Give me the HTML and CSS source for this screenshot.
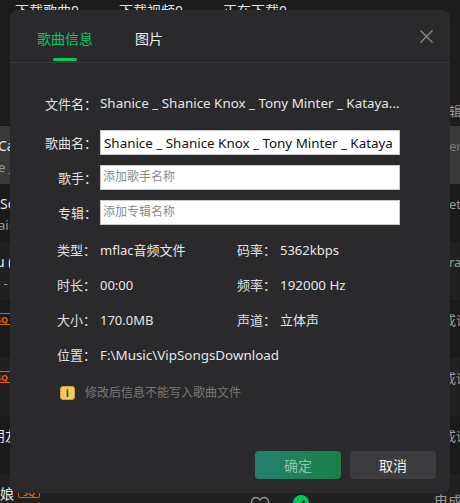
FILE: index.html
```html
<!DOCTYPE html>
<html lang="zh-CN">
<head>
    <meta charset="UTF-8">
    <meta name="viewport" content="width=device-width, initial-scale=1.0">
    <title>歌曲信息</title>
    <link rel="stylesheet" href="styles.css">
</head>
<body>
    <!-- page behind the dialog -->
    <div class="page">
        <div class="top-tabs">
            <span>下载歌曲0</span>
            <span>下载视频0</span>
            <span>正在下载0</span>
        </div>
        <div class="list-head"><span></span><span class="right-col head-col">专辑</span></div>
        <div class="song selected">
            <div class="song-left"><p class="title cut">Ca</p><p class="sub cut">e _</p></div>
            <div class="right-col dim">ery</div>
        </div>
        <div class="song">
            <div class="song-left"><p class="title">So</p><p class="sub cut">ain</p></div>
            <div class="right-col">et</div>
        </div>
        <div class="song alt">
            <div class="song-left"><p class="title cut-more">u (</p><p class="sub">&nbsp;-</p></div>
            <div class="right-col">ral</div>
        </div>
        <div class="song">
            <div class="song-left"><span class="sq cut-sq">SQ</span></div>
            <div class="right-col cjk-col">或语</div>
        </div>
        <div class="song alt">
            <div class="song-left"><span class="sq cut-sq">SQ</span></div>
            <div class="right-col cjk-col">或语</div>
        </div>
        <div class="song">
            <div class="song-left"><p class="title cut-cjk">朋友</p></div>
            <div class="right-col cjk-col">或语</div>
        </div>
        <div class="song alt last">
            <div class="song-left last-left">
                <span class="title">娘</span>
                <span class="sq">SQ</span>
                <svg class="heart" width="20" height="18" viewBox="0 0 20 18" fill="none" stroke="#999" stroke-width="1.4">
                    <path d="M10 16.5 C4 12 1.5 9 1.5 6 C1.5 3.2 3.6 1.5 5.8 1.5 C7.6 1.5 9.1 2.5 10 4 C10.9 2.5 12.4 1.5 14.2 1.5 C16.4 1.5 18.5 3.2 18.5 6 C18.5 9 16 12 10 16.5 Z"/>
                </svg>
                <svg class="done" width="16" height="16" viewBox="0 0 16 16">
                    <circle cx="8" cy="8" r="8" fill="#00c85a"/>
                    <path d="M4.5 8.5 L7 11 L11.5 5.5" fill="none" stroke="#1c1c1c" stroke-width="1.8"/>
                </svg>
            </div>
            <div class="right-col last-col">电成</div>
        </div>
    </div>

    <div class="dialog">
        <div class="dialog-tabs">
            <div class="tab active">歌曲信息</div>
            <div class="tab">图片</div>
            <svg class="close-btn" width="13" height="13" viewBox="0 0 13 13" stroke="#8a8a8a" stroke-width="1.4">
                <path d="M0.5 0.5 L12.5 12.5 M12.5 0.5 L0.5 12.5"/>
            </svg>
        </div>
        <div class="dialog-body">
            <div class="field file-row">
                <span class="label">文件名：</span>
                <span class="value long">Shanice _ Shanice Knox _ Tony Minter _ Kataya...</span>
            </div>
            <div class="field">
                <label class="label" for="songName">歌曲名：</label>
                <input type="text" id="songName" value="Shanice _ Shanice Knox _ Tony Minter _ Kataya">
            </div>
            <div class="field">
                <label class="label" for="singer">歌手：</label>
                <input type="text" id="singer" placeholder="添加歌手名称">
            </div>
            <div class="field">
                <label class="label" for="album">专辑：</label>
                <input type="text" id="album" placeholder="添加专辑名称">
            </div>
            <div class="stats">
                <div class="stat"><span class="label">类型：</span><span class="value">mflac音频文件</span></div>
                <div class="stat second"><span class="label">码率：</span><span class="value">5362kbps</span></div>
                <div class="stat"><span class="label">时长：</span><span class="value">00:00</span></div>
                <div class="stat second"><span class="label">频率：</span><span class="value long">192000 Hz</span></div>
                <div class="stat"><span class="label">大小：</span><span class="value">170.0MB</span></div>
                <div class="stat second"><span class="label">声道：</span><span class="value">立体声</span></div>
                <div class="stat wide"><span class="label">位置：</span><span class="value long">F:\Music\VipSongsDownload</span></div>
            </div>
            <div class="note">
                <span class="note-icon">i</span>
                <span>修改后信息不能写入歌曲文件</span>
            </div>
        </div>
        <div class="dialog-footer">
            <button class="btn-ok">确定</button>
            <button class="btn-cancel">取消</button>
        </div>
    </div>
</body>
</html>
```

FILE: styles.css
```css
html, body {
    height: 503px;
    overflow: hidden;
}
body {
    margin: 0;
    background-color: #1c1c1c;
    color: #e6e6e6;
    font-family: "Noto Sans", "Noto Sans CJK SC", sans-serif;
    font-size: 13px;
    position: relative;
}
p {
    margin: 0;
}

/* page behind */
.top-tabs {
    display: flex;
    gap: 40px;
    height: 100px;
    padding: 1px 0 0 15px;
    box-sizing: border-box;
    font-size: 14px;
    line-height: 20px;
}
.list-head {
    display: grid;
    grid-template-columns: 449px 1fr;
    height: 26px;
    line-height: 22px;
    color: #999;
}
.song {
    display: grid;
    grid-template-columns: 449px 1fr;
    height: 58px;
    background-color: #1a1a1a;
    line-height: 20px;
    color: #aaa;
    overflow: hidden;
}
.song.alt {
    background-color: #212121;
}
.song.selected {
    background-color: #3a3a3a;
}
.song.last {
    height: 29px;
}
.song-left {
    padding-top: 10px;
}
.title {
    color: #e6e6e6;
    font-size: 14px;
}
.sub {
    margin-top: 1px;
    color: #999;
}
.cut {
    margin-left: -2px;
}
.cut-more {
    margin-left: -4px;
}
.cut-cjk {
    margin-left: -9px;
}
.right-col {
    padding-top: 10px;
    color: #999;
    white-space: nowrap;
}
.head-col {
    padding-top: 0;
    margin-left: -13px;
}
.cjk-col {
    margin-left: -6px;
}
.last-col {
    margin-left: -15px;
    padding-top: 17px;
    font-size: 14px;
}
.right-col.dim {
    color: #777;
}
.sq {
    display: inline-block;
    width: 22px;
    height: 12px;
    line-height: 11px;
    border: 1px solid #d8600f;
    border-radius: 2px;
    color: #d8600f;
    font-size: 9px;
    font-weight: 700;
    text-align: center;
    box-sizing: border-box;
}
.cut-sq {
    display: block;
    margin: 3px 0 0 -9px;
}
.last-left {
    display: flex;
    align-items: flex-start;
}
.last-left .sq {
    margin: 2px 0 0 4px;
}
.heart {
    flex: none;
    margin: 12px 0 0 210px;
}
.done {
    flex: none;
    margin: 11px 0 0 23px;
}

/* dialog */
.dialog {
    position: absolute;
    left: 10px;
    top: 10px;
    width: 440px;
    height: 483px;
    background-color: #2a2a2c;
    border-radius: 8px;
    display: flex;
    flex-direction: column;
}
.dialog-tabs {
    position: relative;
    display: flex;
    gap: 42px;
    height: 52px;
    padding-left: 27px;
    border-bottom: 1px solid #3b3b3d;
}
.tab {
    position: relative;
    font-size: 14px;
    line-height: 20px;
    padding-top: 19px;
    color: #eee;
}
.tab.active {
    color: #00cc5f;
}
.tab.active::after {
    content: "";
    position: absolute;
    left: 16px;
    bottom: 1px;
    width: 24px;
    height: 3px;
    border-radius: 2px;
    background-color: #00cc5f;
}
.close-btn {
    position: absolute;
    right: 17px;
    top: 20px;
}
.dialog-body {
    flex: 1;
    padding-top: 29px;
}
.field {
    display: flex;
    align-items: center;
    height: 25px;
    margin-bottom: 10px;
}
.field.file-row {
    height: 22px;
    margin-bottom: 16px;
}
.label {
    flex: none;
    width: 87px;
    text-align: right;
    color: #e0e0e0;
}
.field .label {
    margin-right: 3px;
}
.value {
    color: #e6e6e6;
    white-space: nowrap;
}
.value.long {
    font-size: 13.4px;
}
.field input {
    width: 300px;
    height: 25px;
    box-sizing: border-box;
    padding: 0 3px;
    border: 1px solid #c8c8c8;
    background-color: #fff;
    color: #111;
    font-family: inherit;
    font-size: 13.4px;
    outline: none;
}
.field input:placeholder-shown {
    padding: 0 2px 3px;
}
.field input::placeholder {
    color: #8c8c8c;
    font-size: 12px;
}
.stats {
    display: grid;
    grid-template-columns: 180px 1fr;
    grid-auto-rows: 35px;
    padding: 0 0 0 47px;
    margin-top: -3px;
    align-items: center;
}
.stat {
    display: flex;
    align-items: center;
}
.stat .label {
    width: 43px;
    text-align: left;
}
.stat.wide {
    grid-column: 1 / 3;
}
.note {
    display: flex;
    align-items: center;
    gap: 10px;
    margin: 12px 0 0 50px;
    font-size: 12px;
    line-height: 18px;
    color: #787878;
}
.note-icon {
    width: 15px;
    height: 14px;
    box-sizing: border-box;
    border: 1px solid #c9a23a;
    border-radius: 3px;
    background-color: #f0cc60;
    color: #5a4510;
    font-size: 11px;
    font-weight: 700;
    line-height: 12px;
    text-align: center;
}
.dialog-footer {
    display: flex;
    justify-content: flex-end;
    gap: 9px;
    padding: 0 14px 14px 0;
}
.dialog-footer button {
    width: 86px;
    height: 28px;
    border: none;
    border-radius: 4px;
    font-family: inherit;
    font-size: 14px;
    padding: 0;
}
.btn-ok {
    background: linear-gradient(90deg, #24816f, #1a7f48);
    color: #8fc4ab;
}
.btn-cancel {
    background-color: #3c3c3e;
    color: #eee;
}
```
